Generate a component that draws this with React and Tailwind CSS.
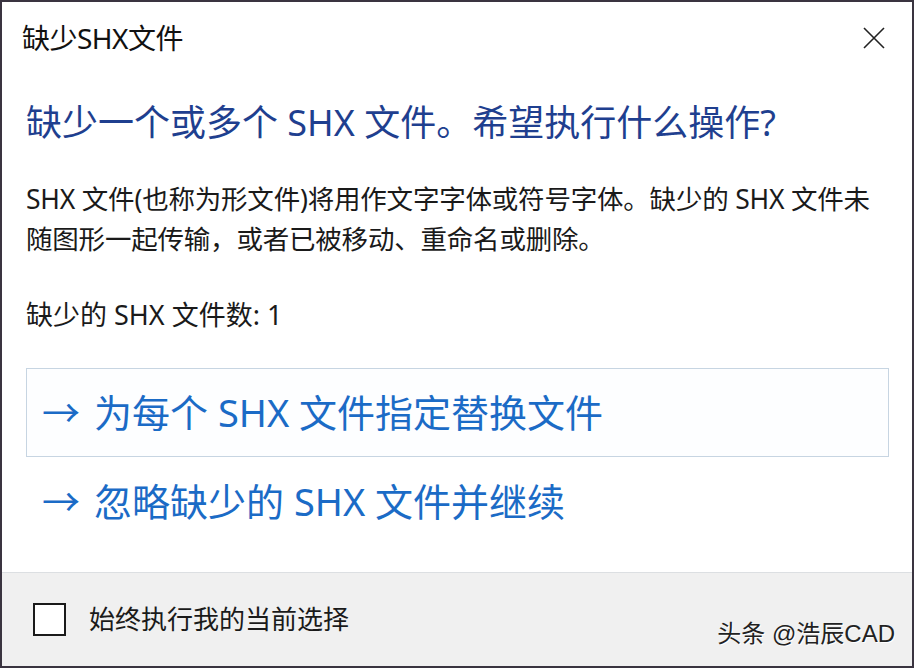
import React from 'react';

const font = "font-['Noto_Sans','Noto_Sans_CJK_SC',sans-serif]";

function CommandLink({ label, framed }) {
  return (
    <div
      className={`flex items-center h-[89px] pl-[15px] text-[38px] text-[#1b6bc6] border ${
        framed ? 'border-[#c7d5e2] bg-[#fdfeff]' : 'border-transparent'
      }`}
    >
      <span className="mr-[14px]">→</span>
      <span>{label}</span>
    </div>
  );
}

export default function App() {
  return (
    <div className={`w-[914px] h-[668px] bg-[#3a3440] p-[2px] ${font}`}>
      <div className="w-full h-full flex flex-col bg-white">
        {/* Title bar */}
        <div className="flex items-center justify-between pt-[18px] pl-[20px] pr-[26px]">
          <span className="text-[28px] leading-[36px] tracking-[-0.5px] text-[#111]">缺少SHX文件</span>
          <svg width="24" height="24" viewBox="0 0 24 24" stroke="#222" strokeWidth="1.6" fill="none">
            <path d="M2 2 L22 22 M22 2 L2 22" />
          </svg>
        </div>

        {/* Content */}
        <div className="flex-1 px-[24px] pr-[23px]">
          <h1 className="mt-[43px] text-[36px] leading-[48px] text-[#1f3f8f]">
            缺少一个或多个 SHX 文件。希望执行什么操作?
          </h1>
          <p className="mt-[32px] text-[26.5px] leading-[40px] tracking-[-0.2px] text-[#1a1a1a]">
            SHX 文件(也称为形文件)将用作文字字体或符号字体。缺少的 SHX 文件未随图形一起传输，或者已被移动、重命名或删除。
          </p>
          <p className="mt-[36px] text-[27px] leading-[40px] text-[#1a1a1a]">缺少的 SHX 文件数: 1</p>
          <div className="mt-[33px]">
            <CommandLink label="为每个 SHX 文件指定替换文件" framed />
            <CommandLink label="忽略缺少的 SHX 文件并继续" />
          </div>
        </div>

        {/* Footer */}
        <div className="h-[94px] bg-[#f0f0f0] border-t border-[#dcdfe2] flex items-center pl-[31px] pr-[17px]">
          <div className="w-[33px] h-[33px] border-2 border-[#1a1a1a] bg-white" />
          <span className="ml-[23px] text-[26px] text-[#1a1a1a]">始终执行我的当前选择</span>
          <span className="ml-auto mt-[28px] text-[24px] text-[#222] font-['Liberation_Sans','Noto_Sans_CJK_SC',sans-serif] [text-shadow:1px_1px_0_#fff]">
            头条 @浩辰CAD
          </span>
        </div>
      </div>
    </div>
  );
}
